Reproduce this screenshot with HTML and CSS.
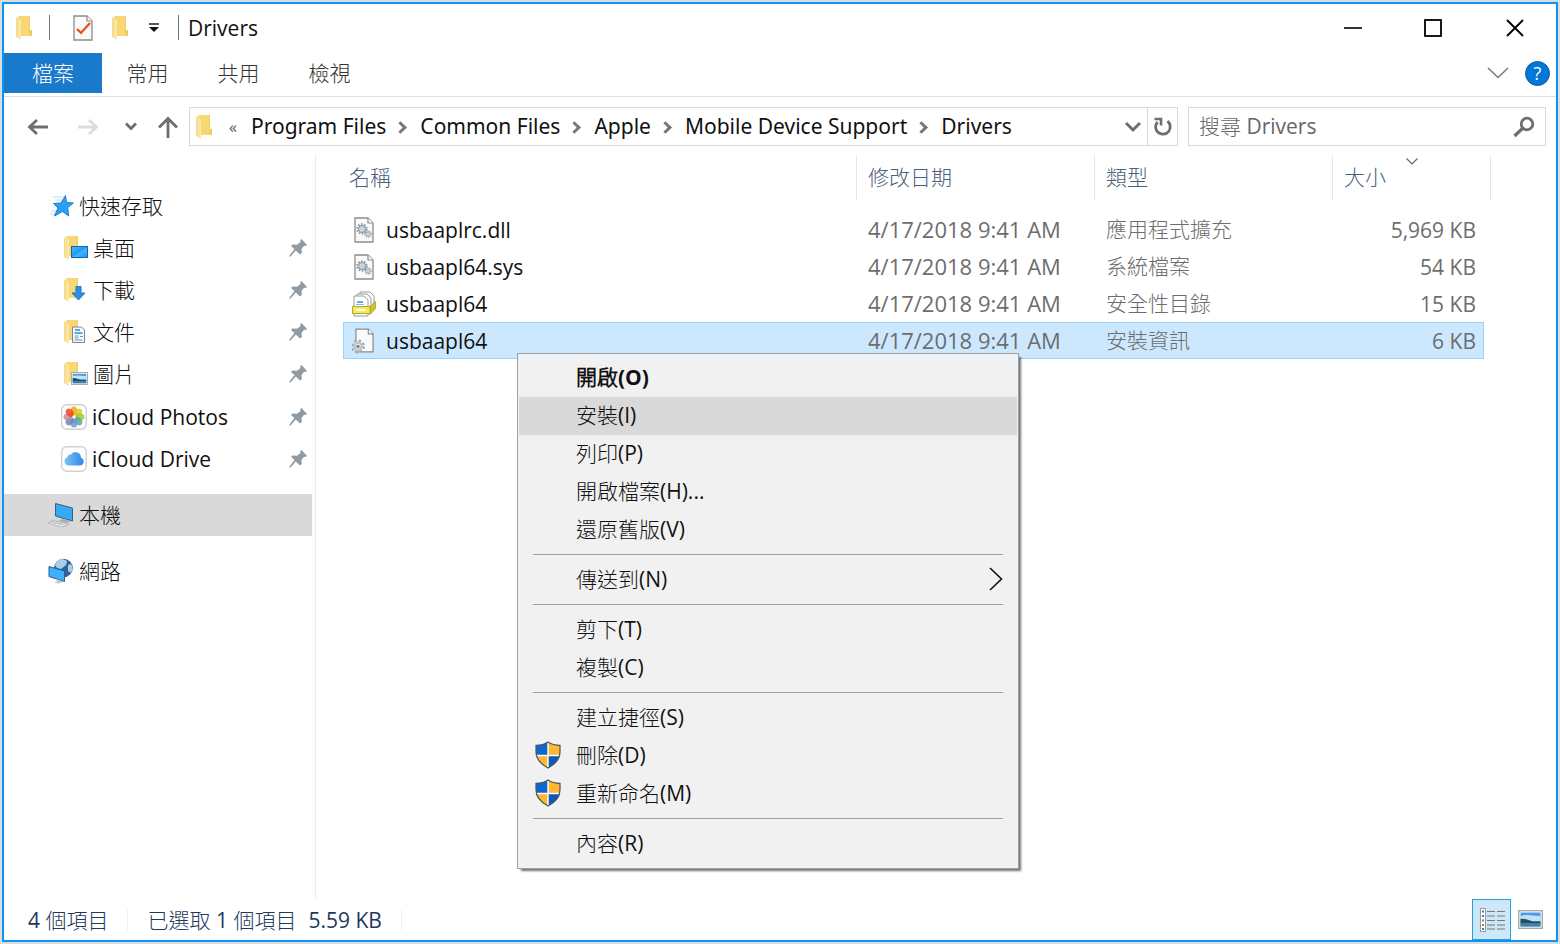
FILE: index.html
```html
<!DOCTYPE html>
<html lang="zh-Hant">
<head>
<meta charset="utf-8">
<title>Drivers</title>
<link rel="stylesheet" href="styles.css">
</head>
<body>
<svg class="defs" aria-hidden="true">
  <defs>
    <linearGradient id="g-front" x1="0" y1="0" x2="1" y2="0"><stop offset="0" stop-color="#f6d98a"/><stop offset="1" stop-color="#fdeab0"/></linearGradient>
    <linearGradient id="g-screen" x1="0" y1="0" x2="1" y2="1"><stop offset="0" stop-color="#4ab8ff"/><stop offset=".5" stop-color="#1f98f0"/><stop offset=".52" stop-color="#42b4ff"/><stop offset="1" stop-color="#1f98f0"/></linearGradient>
    <linearGradient id="g-cloud" x1="0" y1="0" x2="1" y2="0"><stop offset="0" stop-color="#7cc4f8"/><stop offset="1" stop-color="#2f86e8"/></linearGradient>
    <symbol id="folder" viewBox="0 0 17 24">
      <path d="M2 0h12v15h2v5H5z" fill="#f8d775"/>
      <path d="M13 0h1v14h2v6h-3z" fill="#f3cb63"/>
      <path d="M0 1l5 3v20l-5-3z" fill="url(#g-front)"/>
    </symbol>
    <symbol id="page" viewBox="0 0 20 26">
      <path d="M1 1h13l5 5v19H1z" fill="#fafafa" stroke="#8c8c8c" stroke-width="1.3"/>
      <path d="M14 1v5h5" fill="#fff" stroke="#8c8c8c" stroke-width="1.2"/>
    </symbol>
    <symbol id="gear" viewBox="0 0 20 20">
      <circle cx="10" cy="10" r="8" fill="none" stroke="#8798a5" stroke-width="3" stroke-dasharray="2.5 2.53"/>
      <circle cx="10" cy="10" r="5.5" fill="#e3e9ee" stroke="#8798a5" stroke-width="2"/>
      <circle cx="10" cy="10" r="2.2" fill="#fff" stroke="#8798a5"/>
    </symbol>
    <symbol id="sysfile" viewBox="0 0 20 26">
      <use href="#page" width="20" height="26"/>
      <use href="#gear" x="2" y="6" width="12" height="12"/>
      <use href="#gear" x="10" y="13" width="8" height="8"/>
    </symbol>
    <symbol id="pin" viewBox="0 0 18 18">
      <path d="M12.500 0l5.500 6-1.500 1-1.500-.3-2.500 3.300.3 4-1.800 1.500-4.200-4L1.500 17.500.3 17.800l.2-1.300L5.500 10 2 7l1.500-1.500 4.500.2L11.500 3l-.2-2z" fill="#8f9aa2"/>
    </symbol>
    <symbol id="shield" viewBox="0 0 26 28">
      <path d="M13 1c-3 2-7.500 3.300-12 3.300V11c0 7.500 5.500 12.500 12 16z" fill="#0f66cf"/>
      <path d="M13 1c3 2 7.500 3.300 12 3.300V11c0 7.500-5.500 12.500-12 16z" fill="#fdb834"/>
      <path d="M1.200 14H13v13C7 24 2 20 1.200 14z" fill="#fdb834"/>
      <path d="M24.800 14H13v13c6-3 11-7 11.800-13z" fill="#0f57bd"/>
      <path d="M13 2v24M2 14.500h22" stroke="#fff" stroke-width="1.400"/>
      <path d="M13 1c-3 2-7.500 3.300-12 3.300V11c0 7.500 5.500 12.500 12 16 6.500-3.500 12-8.500 12-16V4.300C20.500 4.300 16 3 13 1z" fill="none" stroke="#4c5560" stroke-width="1.200"/>
    </symbol>
    <symbol id="photo" viewBox="0 0 25 19">
      <rect x=".7" y=".7" width="23.600" height="17.600" fill="#fff" stroke="#a9a9a4" stroke-width="1.400"/>
      <rect x="2.500" y="2.500" width="20" height="14" fill="#4c9be8"/>
      <path d="M2.500 6c6-2 10 0 20 0v5h-20z" fill="#c3e2f8"/>
      <path d="M2.500 9c4-1 7 1 12 2.500h8v2h-20z" fill="#23524d"/>
      <path d="M2.500 13h20v3.500h-20z" fill="#3f7fb0"/>
    </symbol>
  </defs>
</svg>

<div class="window">
  <header class="titlebar">
    <svg class="folder-icon" aria-hidden="true"><use href="#folder"/></svg>
    <span class="divider"></span>
    <button class="quick quick-first" aria-label="內容"><svg width="20" height="26" viewBox="0 0 20 26"><use href="#page"/><path d="M4 14l4 4 9-10" fill="none" stroke="#ee4a17" stroke-width="2.200"/></svg></button>
    <button class="quick quick-folder" aria-label="新增資料夾"><svg class="folder-icon"><use href="#folder"/></svg></button>
    <button class="quick quick-menu" aria-label="自訂"><svg width="10" height="9" viewBox="0 0 10 9"><path d="M0 1h10" stroke="#222" stroke-width="1.500"/><path d="M0 4h10L5 9z" fill="#111"/></svg></button>
    <span class="divider"></span>
    <h1 class="title">Drivers</h1>
    <div class="caption">
      <button aria-label="最小化"><svg width="20" height="20" viewBox="0 0 20 20"><path d="M1 10h18" stroke="#000" stroke-width="1.600"/></svg></button>
      <button aria-label="最大化"><svg width="20" height="20" viewBox="0 0 20 20"><rect x="1" y="2" width="16" height="16" fill="none" stroke="#000" stroke-width="1.800"/></svg></button>
      <button aria-label="關閉"><svg width="20" height="20" viewBox="0 0 20 20"><path d="M2 2l16 16M18 2L2 18" stroke="#000" stroke-width="1.800"/></svg></button>
    </div>
  </header>

  <nav class="ribbon">
    <button class="tab tab-file">檔案</button>
    <button class="tab">常用</button>
    <button class="tab">共用</button>
    <button class="tab">檢視</button>
    <button class="ribbon-toggle" aria-label="展開功能區"><svg width="22" height="12" viewBox="0 0 22 12"><path d="M1 1l10 9.500L21 1" fill="none" stroke="#7b7b7b" stroke-width="1.600"/></svg></button>
    <button class="help" aria-label="說明">?</button>
  </nav>

  <div class="navbar">
    <div class="history">
      <button aria-label="上一頁"><svg width="22" height="18" viewBox="0 0 22 18"><path d="M21 9H3M10 2L2.500 9l7.500 7" fill="none" stroke="#6e6e6e" stroke-width="2.800"/></svg></button>
      <button aria-label="下一頁"><svg width="22" height="18" viewBox="0 0 22 18"><path d="M1 9h18M12 2l7.500 7-7.500 7" fill="none" stroke="#dcdcdc" stroke-width="2.800"/></svg></button>
      <button class="recent" aria-label="最近的位置"><svg width="12" height="9" viewBox="0 0 12 9"><path d="M1 1.500l5 5 5-5" fill="none" stroke="#6e6e6e" stroke-width="2.800"/></svg></button>
      <button class="up" aria-label="上一層"><svg width="22" height="22" viewBox="0 0 22 22"><path d="M11 22V3M2 11.500l9-9 9 9" fill="none" stroke="#6e6e6e" stroke-width="2.800"/></svg></button>
    </div>
    <div class="address">
      <svg class="folder-icon" aria-hidden="true"><use href="#folder"/></svg>
      <span class="overflow">«</span>
      <ol class="crumbs">
        <li><a href="#">Program Files</a></li>
        <li><a href="#">Common Files</a></li>
        <li><a href="#">Apple</a></li>
        <li><a href="#">Mobile Device Support</a></li>
        <li><a href="#">Drivers</a></li>
      </ol>
      <button class="address-drop" aria-label="先前的位置"><svg width="16" height="12" viewBox="0 0 16 12"><path d="M1 2l7 7 7-7" fill="none" stroke="#6e6e6e" stroke-width="3"/></svg></button>
      <button class="refresh" aria-label="重新整理"><svg width="20" height="20" viewBox="0 0 20 20"><path d="M14.500 4.200A7.300 7.300 0 1 1 4.500 5" fill="none" stroke="#6e6e6e" stroke-width="2.800"/><path d="M1.500 2H8v6.500" fill="none" stroke="#6e6e6e" stroke-width="2.600"/></svg></button>
    </div>
    <div class="search">
      <input type="search" aria-label="搜尋 Drivers" placeholder="搜尋 Drivers">
      <svg width="22" height="22" viewBox="0 0 22 22" aria-hidden="true"><circle cx="14" cy="8" r="5.800" fill="none" stroke="#6e6e6e" stroke-width="2.800"/><path d="M10 12l-8.500 8" stroke="#6e6e6e" stroke-width="3.200"/></svg>
    </div>
  </div>

  <div class="content">
    <aside class="sidebar">
      <a class="place" href="#"><svg width="24" height="24" viewBox="0 0 24 24"><path d="M3 3h11M5 6h7M0 20h8M1 17h7" stroke="#b5dcf8" stroke-width="1.200"/><path d="M15.500 1.500l1 7 7 .5-5.800 4.500 1 8.500-6.200-4.500L4.500 22l3.500-8-4.500-4.500L11 9z" fill="#2ba1f5" stroke="#1a7fc8"/></svg><span>快速存取</span></a>
      <a class="place child" href="#"><svg width="24" height="24" viewBox="0 0 24 24"><use href="#folder" width="17" height="24"/><rect x="7.500" y="10.500" width="16" height="11" fill="url(#g-screen)" stroke="#1466a8"/></svg><span>桌面</span><svg class="pin"><use href="#pin"/></svg></a>
      <a class="place child" href="#"><svg width="24" height="24" viewBox="0 0 24 24"><use href="#folder" width="17" height="24"/><path d="M12 8.500h5V15h4l-6.500 7L8 15h4z" fill="#2f8de4" stroke="#2277c8"/></svg><span>下載</span><svg class="pin"><use href="#pin"/></svg></a>
      <a class="place child" href="#"><svg width="24" height="24" viewBox="0 0 24 24"><use href="#folder" width="17" height="24"/><path d="M8.500 7h9l3 3v12.500h-12z" fill="#f7fbff" stroke="#858585"/><path d="M11 10h5M10.500 13h8" stroke="#2b8ede" stroke-width="1.600"/><path d="M10.500 16h4M10.500 20h8M16 16.500h3M10.500 18h4" stroke="#6995b8"/></svg><span>文件</span><svg class="pin"><use href="#pin"/></svg></a>
      <a class="place child" href="#"><svg width="24" height="24" viewBox="0 0 24 24"><use href="#folder" width="17" height="24"/><use href="#photo" x="7" y="10" width="17" height="13"/></svg><span>圖片</span><svg class="pin"><use href="#pin"/></svg></a>
      <a class="place app" href="#"><svg width="26" height="26" viewBox="0 0 26 26"><rect x=".7" y=".7" width="24.600" height="24.600" rx="5" fill="#fff" stroke="#cfcfcf" stroke-width="1.400"/><g transform="translate(13 13)" fill-opacity=".85"><ellipse cy="-6" rx="3.400" ry="4.500" fill="#f9a11b"/><ellipse cy="-6" rx="3.400" ry="4.500" fill="#e5c81d" transform="rotate(45)"/><ellipse cy="-6" rx="3.400" ry="4.500" fill="#9cc83c" transform="rotate(90)"/><ellipse cy="-6" rx="3.400" ry="4.500" fill="#5ca5a0" transform="rotate(135)"/><ellipse cy="-6" rx="3.400" ry="4.500" fill="#5f9bd4" transform="rotate(180)"/><ellipse cy="-6" rx="3.400" ry="4.500" fill="#6a85b4" transform="rotate(225)"/><ellipse cy="-6" rx="3.400" ry="4.500" fill="#c98a98" transform="rotate(270)"/><ellipse cy="-6" rx="3.400" ry="4.500" fill="#ee4520" transform="rotate(315)"/></g></svg><span>iCloud Photos</span><svg class="pin"><use href="#pin"/></svg></a>
      <a class="place app" href="#"><svg width="26" height="26" viewBox="0 0 26 26"><rect x=".7" y=".7" width="24.600" height="24.600" rx="5" fill="#fff" stroke="#d2d2d2" stroke-width="1.400"/><path d="M7 19.500a4.300 4.300 0 0 1-.8-8.200A3.500 3.500 0 0 1 10 8.500a5.500 5.500 0 0 1 10 3.300 4 4 0 0 1-.5 7.700z" fill="url(#g-cloud)"/></svg><span>iCloud Drive</span><svg class="pin"><use href="#pin"/></svg></a>
      <a class="place root selected" href="#"><svg width="26" height="26" viewBox="0 0 26 26"><path d="M7.500 1.500l17 4.500v13l-17-5z" fill="#35a9f6" stroke="#3d6178"/><path d="M14 17l8 2-2 2-9-2z" fill="#a5adb3"/><path d="M4 18l17 4.500-7 2.500-14-4z" fill="#eef1f3" stroke="#a9adb0" stroke-width=".8"/><path d="M3 19.500l15 4M7 18.500L2 21M11 19.500L6 22M15 20.500L10 23" stroke="#b3b8bb" stroke-width=".8"/></svg><span>本機</span></a>
      <a class="place root" href="#"><svg width="26" height="26" viewBox="0 0 26 26"><circle cx="15.500" cy="10" r="9.300" fill="#2f6296"/><path d="M7 7c1-3 4-6 8-6l4 2-1 4-5 4-4-1zM20 7l3-1c2 3 2 6 0 9l-3-2z" fill="#a9cde6"/><path d="M1 8.500l15.500 4.500v10.500L1 18.500z" fill="#3fb0fb" stroke="#2a6089"/><path d="M8 21l3 1 5 2-6 1.500-4-1 3-1z" fill="#c0c7cb"/></svg><span>網路</span></a>
    </aside>

    <main class="files">
      <table class="list">
        <colgroup><col><col class="c-wide"><col class="c-wide"><col class="c-size"><col class="c-end"></colgroup>
        <thead>
          <tr><th>名稱</th><th>修改日期</th><th>類型</th><th class="sorted">大小<svg class="sort" width="12" height="7" viewBox="0 0 12 7"><path d="M.5.500L6 6l5.500-5.500" fill="none" stroke="#666" stroke-width="1.200"/></svg></th><th class="end"></th></tr>
        </thead>
        <tbody>
          <tr><td><span class="file"><svg width="24" height="26"><use href="#sysfile" x="2" width="20" height="26"/></svg>usbaaplrc.dll</span></td><td>4/17/2018 9:41 AM</td><td>應用程式擴充</td><td>5,969 KB</td><td></td></tr>
          <tr><td><span class="file"><svg width="24" height="26"><use href="#sysfile" x="2" width="20" height="26"/></svg>usbaapl64.sys</span></td><td>4/17/2018 9:41 AM</td><td>系統檔案</td><td>54 KB</td><td></td></tr>
          <tr><td><span class="file"><svg width="24" height="26" viewBox="0 0 24 26"><path d="M8 1h10l4 4v14H8z" fill="#fff" stroke="#999"/><path d="M5 3h10l4 4v14H5z" fill="#fff" stroke="#999"/><path d="M2 5h10l4 4v16H2z" fill="#fff" stroke="#999"/><path d="M5 11h6" stroke="#4287dc" stroke-width="1.500"/><path d="M4 13.500h8" stroke="#8bb3e3"/><path d="M18 15.500l5.500-5v7l-5.500 6z" fill="#cfc42c" stroke="#a99f22" stroke-width=".8"/><path d="M.5 15.500H18v7H.5z" fill="#f4ea55" stroke="#b3aa2a"/><path d="M4 19h9" stroke="#fff" stroke-width="2"/></svg>usbaapl64</span></td><td>4/17/2018 9:41 AM</td><td>安全性目錄</td><td>15 KB</td><td></td></tr>
          <tr class="selected"><td><span class="file"><svg width="24" height="26" viewBox="0 0 24 26"><use href="#page" x="3" y="0" width="19" height="25"/><circle cx="6" cy="18.500" r="5.600" fill="none" stroke="#a2a9ad" stroke-width="2.800" stroke-dasharray="2.200 2.200"/><circle cx="6" cy="18.500" r="3.700" fill="#fff" stroke="#c0c5c9" stroke-width="2.600"/><circle cx="6" cy="18.500" r="1.800" fill="#7c858b"/></svg>usbaapl64</span></td><td>4/17/2018 9:41 AM</td><td>安裝資訊</td><td>6 KB</td><td></td></tr>
        </tbody>
      </table>
    </main>
  </div>

  <footer class="status">
    <span class="status-part">4 個項目</span>
    <span class="status-part"><span>已選取 1 個項目</span><span>5.59 KB</span></span>
    <div class="views">
      <button class="view active" aria-label="詳細資料"><svg width="26" height="24" viewBox="0 0 26 24"><rect x="1.500" y=".5" width="5" height="23" fill="#fff" stroke="#989898"/><path d="M8 3.500h8M18 3.500h8M8 8h8M18 8h8M8 12.500h8M18 12.500h8M8 17h8M18 17h8M8 21h8M18 21h8" stroke="#777" stroke-width="1.200"/><path d="M3 3.500h2M3 8h2M3 21h2" stroke="#3d78b8" stroke-width="2"/><path d="M3 12.500h2M3 17h2" stroke="#c07a50" stroke-width="2"/></svg></button>
      <button class="view" aria-label="大圖示"><svg width="25" height="19"><use href="#photo"/></svg></button>
    </div>
  </footer>
</div>

<div class="menu" role="menu">
  <button class="item default" role="menuitem">開啟(O)</button>
  <button class="item hover" role="menuitem">安裝(I)</button>
  <button class="item" role="menuitem">列印(P)</button>
  <button class="item" role="menuitem">開啟檔案(H)...</button>
  <button class="item" role="menuitem">還原舊版(V)</button>
  <hr>
  <button class="item" role="menuitem">傳送到(N)<svg class="more" width="14" height="24" viewBox="0 0 14 24"><path d="M1 1l11.500 11L1 23" fill="none" stroke="#111" stroke-width="1.600"/></svg></button>
  <hr>
  <button class="item" role="menuitem">剪下(T)</button>
  <button class="item" role="menuitem">複製(C)</button>
  <hr>
  <button class="item" role="menuitem">建立捷徑(S)</button>
  <button class="item shielded" role="menuitem"><svg class="shield"><use href="#shield"/></svg>刪除(D)</button>
  <button class="item shielded" role="menuitem"><svg class="shield"><use href="#shield"/></svg>重新命名(M)</button>
  <hr>
  <button class="item" role="menuitem">內容(R)</button>
</div>
</body>
</html>
```
FILE: styles.css
```css
* { box-sizing: border-box; }
body {
  margin: 0;
  padding: 2px;
  min-height: 100vh;
  display: flex;
  position: relative;
  background: #dcdcdc;
  color: #111;
  font: 21px/30px "Open Sans", "Noto Sans CJK TC Light", "Noto Sans CJK TC", sans-serif;
}
button, input { font: inherit; color: inherit; border: 0; background: none; padding: 0; margin: 0; }
button { display: flex; align-items: center; justify-content: center; }
a { color: inherit; text-decoration: none; }
svg { flex: none; display: block; }
.defs { position: absolute; width: 0; height: 0; }
.folder-icon { width: 17px; height: 24px; }

.window { flex: 1; display: flex; flex-direction: column; background: #fff; border: 2px solid #0a96f8; }

.titlebar { display: flex; align-items: center; height: 49px; padding: 0 20px 2px 12px; }
.divider { width: 1px; height: 25px; background: #777; margin-left: 16px; }
.quick-first { margin-left: 23px; }
.quick-folder { margin-left: 19px; }
.quick-menu { margin-left: 20px; }
.quick-menu + .divider { margin-left: 19px; }
.title { margin: 0 0 0 9px; font-size: 21px; font-weight: 400; }
.caption { display: flex; gap: 61px; margin-left: auto; padding-right: 11px; }

.ribbon { display: flex; align-items: center; height: 44px; padding-right: 6px; padding-bottom: 3px; border-bottom: 1px solid #dfdfdf; }
.tab { height: 40px; width: 91px; color: #333; font-weight: 300; }
.tab-file { width: 98px; background: #1979ca; color: #fff; }
.ribbon-toggle { margin-left: auto; }
.help { width: 25px; height: 25px; margin-left: 16px; border: 1px solid #0a5cad; border-radius: 50%; background: #0078d7; color: #fff; font-size: 18px; line-height: 20px; }

.navbar { display: flex; gap: 10px; padding: 10px 10px 0 23px; }
.history { display: flex; align-items: center; width: 152px; }
.history button + button { margin-left: 28px; }
.history .recent { margin-left: 26px; }
.history button.up { margin-left: 20px; }
.address { flex: 1; display: flex; align-items: center; height: 39px; border: 1px solid #d9d9d9; padding-left: 6px; }
.overflow { width: 38px; padding-left: 16px; font-size: 16px; color: #555; }
.crumbs { flex: 1; display: flex; margin: 0; padding: 0 0 2px; list-style: none; font-family: "Noto Sans", "Noto Sans CJK TC Light", sans-serif; }
.crumbs li { display: flex; align-items: center; }
.crumbs li + li::before { content: ""; box-sizing: border-box; width: 9px; height: 9px; margin: 4px 15px 0 10px; border: solid #777; border-width: 3px 3px 0 0; transform: rotate(45deg); }
.address-drop { width: 28px; height: 37px; }
.refresh { width: 30px; height: 37px; border-left: 1px solid #d9d9d9; }
.search { width: 358px; height: 39px; display: flex; align-items: center; padding: 0 10px; border: 1px solid #d9d9d9; }
.search input { flex: 1; min-width: 0; padding-bottom: 2px; outline: 0; }
.search input::placeholder { color: #666; opacity: 1; }

.content { flex: 1; display: flex; padding-top: 9px; }
.sidebar { width: 312px; padding-top: 30px; border-right: 1px solid #ececec; }
.place { display: flex; align-items: center; gap: 5px; height: 42px; margin-right: 3px; padding: 0 5px 0 46px; }
.child { padding-left: 60px; }
.child span { padding-bottom: 1px; }
.app { padding: 2px 5px 0 57px; }
.root { margin-top: 14px; padding-left: 44px; }
.root.selected { margin-top: 15px; }
.place.selected { background: #d9d9d9; }
.pin { width: 18px; height: 18px; margin-left: auto; }

.files { flex: 1; padding: 0 65px 0 27px; }
.list { width: 100%; table-layout: fixed; border-collapse: separate; border-spacing: 0; }
.c-wide { width: 238px; }
.c-size { width: 151px; }
.c-end { width: 7px; }
th, td { padding: 0 0 0 11px; text-align: left; white-space: nowrap; }
th { height: 45px; padding-bottom: 2px; color: #4c607a; font-weight: 400; position: relative; border-right: 1px solid #e6e6e6; }
th:first-child { padding-left: 6px; }
th.sorted { border-right: 0; }
.sort { position: absolute; left: 73px; top: 3px; }
thead::after { content: ""; display: block; height: 11px; }
td { height: 37px; color: #6d6d6d; border: solid transparent; border-width: 1px 0; }
td:first-child { padding-left: 8px; color: #111; border-left-width: 1px; }
td:nth-child(2) { font-size: 22px; padding-bottom: 2px; }
td:nth-child(3) { padding-bottom: 2px; }
td:nth-child(4) { padding: 0 7px 0 0; text-align: right; border-right-width: 1px; }
td:last-child { padding: 0; }
.file { display: flex; align-items: center; gap: 10px; }
.selected td:not(:last-child) { background: #cce8ff; border-color: #99d1ff; }

.status { display: flex; align-items: center; height: 41px; padding-left: 24px; color: #1e395b; }
.status-part { display: flex; gap: 12px; padding-right: 19px; margin-right: 19px; border-right: 1px solid #efefef; line-height: 20px; }
.views { display: flex; margin-left: auto; align-self: stretch; padding-right: 6px; }
.view { width: 39px; height: 41px; }
.view.active { background: #cce8f6; border: 1px solid #26a0da; }

.menu { position: absolute; left: 517px; top: 353px; width: 502px; padding: 5px 1px; background: #f1f1f1; border: 1px solid #a0a0a0; box-shadow: 3px 3px 2px -1px rgba(0, 0, 0, .55); }
.item { width: 100%; height: 38px; justify-content: flex-start; padding: 0 14px 2px 57px; }
.default { font-weight: 700; }
.hover { background: #d9d9d9; }
.menu hr { height: 1px; margin: 5px 14px 6px; border: 0; background: #a0a0a0; }
.more { margin-left: auto; }
.shielded { padding-left: 16px; gap: 15px; }
.shield { width: 26px; height: 28px; }
```
